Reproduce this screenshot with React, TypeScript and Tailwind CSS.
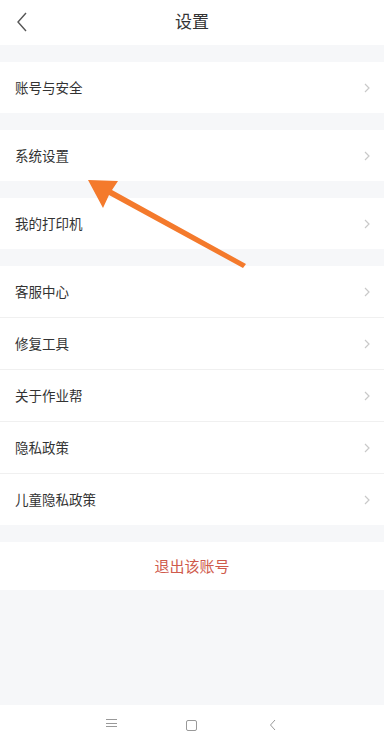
import React from "react";

const font = { fontFamily: '"Noto Sans CJK SC", "Noto Sans", sans-serif' };

function Chevron() {
  return (
    <svg width="6" height="10" viewBox="0 0 6 10" className="mr-[14px]">
      <path d="M1 1 L5 5 L1 9" fill="none" stroke="#c9c9c9" strokeWidth="1.2" />
    </svg>
  );
}

function Row({ label, divider = false }: { label: string; divider?: boolean }) {
  return (
    <div className="bg-white">
      <div className={`flex items-center justify-between pl-[15px] ${divider ? "h-[52px] border-t border-[#f0f0f0]" : "h-[51px]"}`}>
        <span className="text-[13.5px] text-[#333]">{label}</span>
        <Chevron />
      </div>
    </div>
  );
}

function Gap() {
  return <div className="h-[17px] bg-[#f6f7f9]" />;
}

export default function App() {
  return (
    <div className="w-[388px] h-[740px] bg-white relative overflow-hidden" style={font}>
      <div className="w-[384px] flex flex-col h-full">
        <div className="h-[45px] flex items-center justify-center relative bg-white">
          <svg width="12" height="20" viewBox="0 0 12 20" className="absolute left-[16px] top-[12px]">
            <path d="M10 1 L2 10 L10 19" fill="none" stroke="#555" strokeWidth="1.4" />
          </svg>
          <span className="text-[17px] text-[#333] mt-[-4px]">设置</span>
        </div>
        <Gap />
        <Row label="账号与安全" />
        <Gap />
        <Row label="系统设置" />
        <Gap />
        <Row label="我的打印机" />
        <Gap />
        <Row label="客服中心" />
        <Row label="修复工具" divider />
        <Row label="关于作业帮" divider />
        <Row label="隐私政策" divider />
        <Row label="儿童隐私政策" divider />
        <Gap />
        <div className="h-[48px] bg-white flex items-center justify-center">
          <span className="text-[15px] text-[#cf5a4c]">退出该账号</span>
        </div>
        <div className="flex-1 bg-[#f6f7f9]" />
        <div className="h-[35px] bg-white relative">
          <div className="absolute left-[106px] top-[14px] flex flex-col gap-[2.5px]">
            <div className="w-[11px] h-[1px] bg-[#999]" />
            <div className="w-[11px] h-[1px] bg-[#999]" />
            <div className="w-[11px] h-[1px] bg-[#999]" />
          </div>
          <div className="absolute left-[186px] top-[15px] w-[11px] h-[11px] border border-[#999] rounded-[2px]" />
          <svg width="8" height="12" viewBox="0 0 8 12" className="absolute left-[269px] top-[14px]">
            <path d="M6 1 L1.5 6 L6 11" fill="none" stroke="#999" strokeWidth="1" />
          </svg>
        </div>
      </div>
      <svg width="388" height="740" className="absolute left-0 top-0 pointer-events-none">
        <polygon points="88,180 118,181 112,190 246,264 243,268 109,195 103,208" fill="#f47a2c" />
      </svg>
    </div>
  );
}
